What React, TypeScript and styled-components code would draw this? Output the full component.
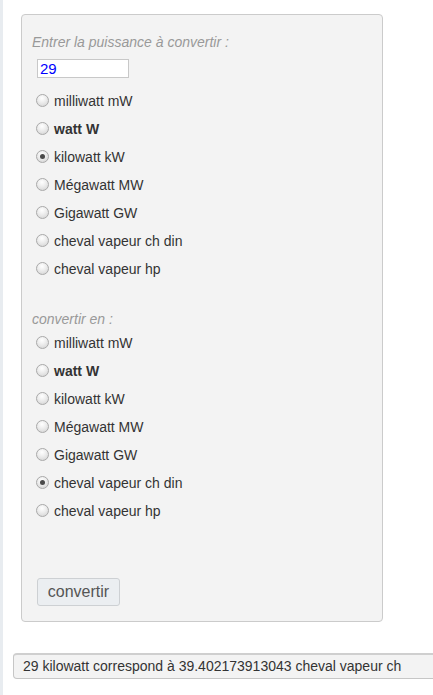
import React, { useState } from "react";
import styled, { createGlobalStyle } from "styled-components";

const Global = createGlobalStyle`
  html, body { margin: 0; padding: 0; background: #fff; }
  body { font-family: "Liberation Sans", Arial, sans-serif; font-size: 14px; color: #333; overflow: hidden; }
`;

const Page = styled.div`
  min-height: 695px;
  border-left: 3px solid #e8ecf0;
  padding-top: 14px;
  overflow: hidden;
`;

const Panel = styled.form`
  margin-left: 18px;
  width: 362px;
  background: #f3f3f3;
  border: 1px solid #cbcbcb;
  border-radius: 4px;
  padding: 17px 0 15px 10px;
  box-sizing: border-box;
`;

const Legend = styled.div<{ $gap?: number }>`
  font-style: italic;
  color: #999;
  line-height: 20px;
  margin-top: ${(p) => p.$gap ?? 0}px;
`;

const NumberInput = styled.input`
  display: block;
  margin: 7px 0 9px 5px;
  width: 92px;
  height: 19px;
  box-sizing: border-box;
  border: 1px solid #c8c8c8;
  background: #fff;
  color: #0000ff;
  font-family: "Liberation Sans", Arial, sans-serif;
  font-size: 15px;
  padding: 0 2px;
  outline: none;
`;

const Row = styled.label<{ $bold?: boolean }>`
  display: flex;
  align-items: center;
  height: 28px;
  padding-left: 4px;
  font-weight: ${(p) => (p.$bold ? 700 : 400)};
  color: #333;
  cursor: pointer;
`;

const Radio = styled.input`
  appearance: none;
  -webkit-appearance: none;
  margin: -2px 5px 0 0;
  width: 13px;
  height: 13px;
  border-radius: 50%;
  border: 1px solid #a9a9a9;
  background: radial-gradient(circle at 45% 30%, #ffffff 0%, #ececec 45%, #cfcfcf 100%);
  box-sizing: border-box;
  position: relative;
  flex: none;
  &:checked::after {
    content: "";
    position: absolute;
    left: 3px;
    top: 3px;
    width: 5px;
    height: 5px;
    border-radius: 50%;
    background: #4a4a4a;
  }
`;

const Button = styled.button`
  margin: 53px 0 0 5px;
  width: 83px;
  height: 28px;
  background: #ebeef1;
  border: 1px solid #cdd0d3;
  border-radius: 3px;
  color: #555;
  font-family: "Liberation Sans", Arial, sans-serif;
  font-size: 16px;
  padding: 0;
`;

const Result = styled.div`
  margin: 31px 0 0 10px;
  width: 440px;
  height: 26px;
  box-sizing: border-box;
  background: #f3f3f3;
  border: 1px solid #c6c6c6;
  border-top: 2px solid #cfcfcf;
  border-radius: 4px;
  padding-left: 9px;
  line-height: 22px;
  color: #333;
  white-space: nowrap;
`;

const units = [
  { id: "mW", label: "milliwatt mW" },
  { id: "W", label: "watt W", bold: true },
  { id: "kW", label: "kilowatt kW" },
  { id: "MW", label: "Mégawatt MW" },
  { id: "GW", label: "Gigawatt GW" },
  { id: "ch", label: "cheval vapeur ch din" },
  { id: "hp", label: "cheval vapeur hp" },
];

export default function App() {
  const [value, setValue] = useState("29");
  const [from, setFrom] = useState("kW");
  const [to, setTo] = useState("ch");
  return (
    <Page>
      <Global />
      <Panel onSubmit={(e) => e.preventDefault()}>
        <Legend>Entrer la puissance à convertir :</Legend>
        <NumberInput value={value} onChange={(e) => setValue(e.target.value)} />
        {units.map((u) => (
          <Row key={u.id} $bold={u.bold}>
            <Radio type="radio" name="from" checked={from === u.id} onChange={() => setFrom(u.id)} />
            {u.label}
          </Row>
        ))}
        <Legend $gap={26}>convertir en :</Legend>
        {units.map((u) => (
          <Row key={u.id} $bold={u.bold}>
            <Radio type="radio" name="to" checked={to === u.id} onChange={() => setTo(u.id)} />
            {u.label}
          </Row>
        ))}
        <Button type="submit">convertir</Button>
      </Panel>
      <Result>29 kilowatt correspond à 39.402173913043 cheval vapeur ch</Result>
    </Page>
  );
}
